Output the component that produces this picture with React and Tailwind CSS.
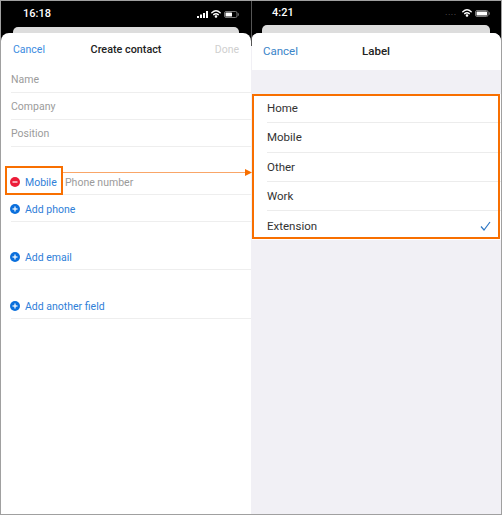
const font = { fontFamily: 'Roboto, "Liberation Sans", sans-serif' };

function Status({ time, dots, className }) {
  return (
    <div className={`flex items-center justify-between text-white font-medium text-[11px] ${className}`}>
      <span>{time}</span>
      <div className="flex items-center gap-[3px]">
        {dots ? (
          <span className="text-[#666] text-[7px] tracking-[1px] mr-[2px]">....</span>
        ) : (
          <svg width="11" height="7" viewBox="0 0 11 7" fill="#fff"><rect x="0" y="5" width="2" height="2" /><rect x="3" y="3.5" width="2" height="3.5" /><rect x="6" y="2" width="2" height="5" /><rect x="9" y="0" width="2" height="7" /></svg>
        )}
        <svg width="10" height="8" viewBox="0 0 24 18" fill="none" stroke="#fff" strokeWidth="3.4" strokeLinecap="round"><path d="M2 6c6-5.5 14-5.5 20 0" /><path d="M6.500 10.500c3.500-3 7.500-3 11 0" /><circle cx="12" cy="15" r="1.500" fill="#fff" /></svg>
        <svg width="15" height="7" viewBox="0 0 15 7"><rect x="0.500" y="0.500" width="12.500" height="6" rx="1.500" fill="none" stroke="#777" /><rect x="1.500" y="1.500" width={dots ? 10.500 : 6.500} height="4" rx="0.500" fill="#fff" /><rect x="13.800" y="2.300" width="1" height="2.400" fill="#777" /></svg>
      </div>
    </div>
  );
}

function Field({ children, h }) {
  return <div className={`flex items-center border-b border-[#eeeeee] pt-[2px] text-[10.500px] text-[#9b9b9b] ${h}`}>{children}</div>;
}

function Circle({ color, minus }) {
  return (
    <svg width="10" height="10" viewBox="0 0 10 10" className="shrink-0 mr-[5px] -ml-[1px]">
      <circle cx="5" cy="5" r="5" fill={color} />
      <rect x="2.500" y="4.400" width="5" height="1.200" fill="#fff" />
      {!minus && <rect x="4.400" y="2.500" width="1.200" height="5" fill="#fff" />}
    </svg>
  );
}

function AddRow({ label, mt, h }) {
  return (
    <div className={`flex items-center border-b border-[#eeeeee] pt-[1px] text-[10.500px] text-[#2f80d8] ${mt} ${h}`}>
      <Circle color="#0a6fdc" />
      <span className="pt-[2px]">{label}</span>
    </div>
  );
}

function LabelRow({ label, check, last }) {
  return (
    <div className={`ml-[15px] pr-[10px] pt-[1px] h-[29.300px] flex items-center justify-between text-[#333] text-[11.500px] ${last ? "" : "border-b border-[#ececec]"}`}>
      <span>{label}</span>
      {check && (
        <svg width="11" height="10" viewBox="0 0 11 10" fill="none" stroke="#2f78c4" strokeWidth="1.200"><path d="M1 5.500 4 9 10 1" /></svg>
      )}
    </div>
  );
}

export default function App() {
  return (
    <div style={font} className="relative w-[502px] h-[515px] bg-black border border-[#a0a0a0] flex overflow-hidden">
      <div className="w-[250px] h-full flex flex-col">
        <Status time="16:18" className="h-[26px] pl-[22px] pr-[12px]" />
        <div className="h-[6px] mx-[12px] bg-[#dddddd] rounded-t-[5px]" />
        <div className="flex-1 bg-white rounded-t-[8px]">
          <div className="h-[33px] pt-[1px] px-[12px] flex items-center text-[10.500px]">
            <span className="flex-1 text-[#3b8be0]">Cancel</span>
            <span className="text-[#222] font-medium text-[10.800px]">Create contact</span>
            <span className="flex-1 text-right text-[#cfcfcf]">Done</span>
          </div>
          <div className="pl-[10px]">
            <Field h="h-[27px]">Name</Field>
            <Field h="h-[27px]">Company</Field>
            <Field h="h-[27px]">Position</Field>
            <div className="h-[21px]" />
            <Field h="h-[27px]">
              <Circle color="#ec1c38" minus />
              <span className="text-[#2f80d8] w-[40px] pt-[2px]">Mobile</span>
              <span className="pt-[2px]">Phone number</span>
            </Field>
            <AddRow label="Add phone" h="h-[27px]" />
            <AddRow label="Add email" mt="mt-[21px]" h="h-[27px]" />
            <AddRow label="Add another field" mt="mt-[22px]" h="h-[27px]" />
          </div>
        </div>
      </div>
      <div className="relative w-[250px] h-full flex flex-col">
        <div className="absolute left-0 top-0 w-[1px] h-[45px] bg-[#555]" />
        <Status time="4:21" dots className="h-[24px] pl-[21px] pr-[11px]" />
        <div className="h-[8px] mx-[11px] bg-[#dddddd] rounded-t-[5px]" />
        <div className="flex-1 bg-[#f1f0f5] rounded-t-[8px] overflow-hidden border-l border-[#f1f0f5]">
          <div className="h-[37px] bg-white px-[11px] flex items-center text-[11.500px] relative">
            <span className="text-[#3a84c8]">Cancel</span>
            <span className="flex-1 text-center text-[#222] font-medium pr-[36px]">Label</span>
          </div>
          <div className="h-[24px]" />
          <div className="bg-white">
            <LabelRow label="Home" />
            <LabelRow label="Mobile" />
            <LabelRow label="Other" />
            <LabelRow label="Work" />
            <LabelRow label="Extension" check last />
          </div>
        </div>
      </div>
      {/* callouts */}
      <div className="absolute left-[4px] top-[165px] w-[58px] h-[29px] border-2 border-[#f86f00]" />
      <div className="absolute left-[251px] top-[93px] w-[248px] h-[145px] border-2 border-[#f86f00]" />
      <div className="absolute left-[62px] top-[171px] w-[184px] h-[1px] bg-[#f9a668]" />
      <svg className="absolute left-[244px] top-[168px]" width="7" height="7" viewBox="0 0 7 7"><path d="M0 0 7 3.500 0 7Z" fill="#f86f00" /></svg>
    </div>
  );
}
